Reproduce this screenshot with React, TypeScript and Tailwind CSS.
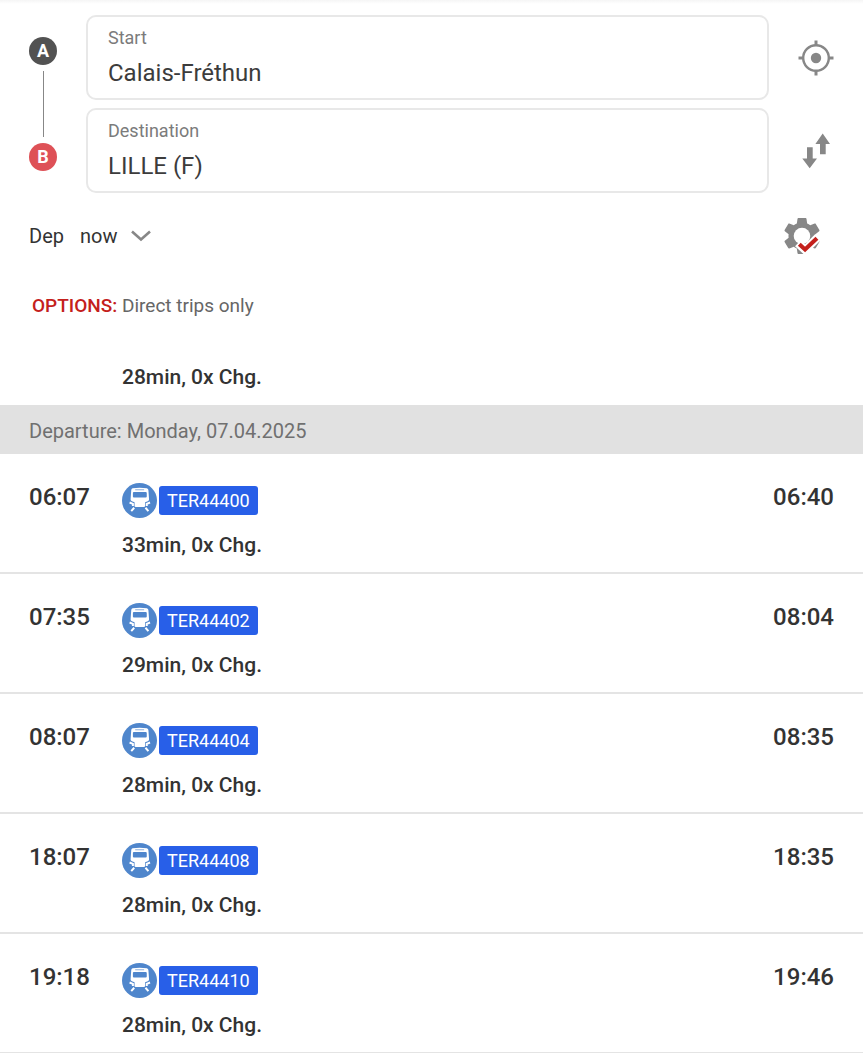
type Trip = {
  departure: string;
  arrival: string;
  line: string;
  duration: string;
};

const trips: Trip[] = [
  { departure: "06:07", arrival: "06:40", line: "TER44400", duration: "33min" },
  { departure: "07:35", arrival: "08:04", line: "TER44402", duration: "29min" },
  { departure: "08:07", arrival: "08:35", line: "TER44404", duration: "28min" },
  { departure: "18:07", arrival: "18:35", line: "TER44408", duration: "28min" },
  { departure: "19:18", arrival: "19:46", line: "TER44410", duration: "28min" },
];

function LocateIcon() {
  return (
    <svg viewBox="0 0 36 36" className="size-9" fill="none" stroke="#878787" aria-hidden="true">
      <circle cx="18" cy="18" r="12.8" strokeWidth="2.4" />
      <circle cx="18" cy="18" r="5.2" fill="#878787" stroke="none" />
      <path d="M18 .5v5M18 30.5v5M.5 18h5M30.5 18h5" strokeWidth="3" />
    </svg>
  );
}

function SwapIcon() {
  return (
    <svg viewBox="0 0 36 36" className="size-9" fill="#878787" aria-hidden="true">
      <path d="M24.700 .6 32 11h-4.300v10.200h-5.700V11h-4.600z" />
      <path d="M9 14.200h5.700v11.300H19L11.700 35.200 4.300 25.500H9z" />
    </svg>
  );
}

function SettingsIcon() {
  return (
    <svg viewBox="2 2 20 20" className="size-9" fill="none" aria-hidden="true">
      <path
        fill="#878787"
        d="M19.430 12.980c.04-.32.07-.64.07-.98s-.03-.66-.07-.98l2.110-1.650c.19-.15.24-.42.12-.64l-2-3.460c-.12-.22-.39-.3-.61-.22l-2.490 1c-.52-.4-1.080-.73-1.690-.98l-.38-2.650C14.460 2.180 14.250 2 14 2h-4c-.25 0-.46.18-.49.42l-.38 2.650c-.61.25-1.170.59-1.690.98l-2.490-1c-.23-.09-.49 0-.61.22l-2 3.460c-.13.22-.07.49.12.64l2.110 1.650c-.04.32-.07.65-.07.98s.03.66.07.98l-2.110 1.650c-.19.15-.24.42-.12.64l2 3.460c.12.22.39.3.61.22l2.490-1c.52.4 1.080.73 1.690.98l.38 2.650c.03.24.24.42.49.42h4c.25 0 .46-.18.49-.42l.38-2.650c.61-.25 1.170-.59 1.690-.98l2.490 1c.23.09.49 0 .61-.22l2-3.460c.12-.22.07-.49-.12-.64l-2.110-1.650z"
      />
      <circle cx="12" cy="12" r="4.6" fill="#fff" />
      <path d="M9.700 16 13.700 19.700 21 12.600" stroke="#fff" strokeWidth="4.600" />
      <path d="M10.500 16.600 13.700 19.500 20.300 13.300" stroke="#c4201c" strokeWidth="2.300" />
    </svg>
  );
}

function TrainIcon() {
  return (
    <svg viewBox="0 0 106 106" className="size-[35px]" aria-hidden="true">
      <circle cx="53" cy="53" r="53" fill="#4f86cc" />
      <path
        fill="#fff"
        d="M32 16q21.500-3 43 0 5 1 5 6l2 28q0 4-4 5l-8 3v12q0 3-4 3H42q-4 0-4-3V58l-8-3q-4-1-4-5l2-28q0-5 4-6z"
      />
      <path stroke="#4f86cc" strokeWidth="2" d="M40 20.500h27" />
      <rect x="33" y="27" width="42" height="17" rx="3" fill="#4f86cc" />
      <path
        stroke="#fff"
        strokeWidth="6"
        fill="none"
        d="M23 59l10 4v7M85 59l-10 4v7M37 75l-9 10M71 75l9 10"
      />
    </svg>
  );
}

function Field({ id, label, value }: { id: string; label: string; value: string }) {
  return (
    <div className="flex h-[85px] flex-col rounded-[10px] border-2 border-[#e8e8e8] px-5 pt-2">
      <label htmlFor={id} className="text-lg leading-[26px] text-[#7b7b7b]">
        {label}
      </label>
      <input
        id={id}
        type="text"
        defaultValue={value}
        className="mt-1.5 h-8 w-full bg-transparent text-2xl text-[#3c3c3c] outline-none"
      />
    </div>
  );
}

function TripRow({ trip }: { trip: Trip }) {
  return (
    <li className="flex h-[120px] items-start border-b-2 border-[#e4e4e4] px-[29px] pt-[29px]">
      <time className="w-[93px] text-2xl leading-7 font-medium">{trip.departure}</time>
      <div className="flex-1">
        <div className="flex items-center gap-0.5">
          <TrainIcon />
          <span className="rounded-[3px] bg-[#285fe8] px-2 text-lg leading-[29px] text-white">
            {trip.line}
          </span>
        </div>
        <p className="mt-[13px] text-[21px] leading-7 font-medium">{trip.duration}, 0x Chg.</p>
      </div>
      <time className="text-2xl leading-7 font-medium">{trip.arrival}</time>
    </li>
  );
}

export default function App() {
  return (
    <main className="min-h-screen bg-white font-[Roboto,sans-serif] text-[#333333]">
      <div className="h-1 bg-linear-to-b from-[#f5f5f5] to-white" />

      <form className="flex gap-[29px] px-[29px] pt-[11px]">
        <div className="flex flex-col items-center py-[22px] text-lg leading-7 font-bold text-white">
          <span className="size-7 rounded-full bg-[#525252] text-center">A</span>
          <span className="my-[6px] w-px flex-1 bg-[#878787]" />
          <span className="size-7 rounded-full bg-[#de5157] text-center">B</span>
        </div>
        <div className="flex flex-1 flex-col gap-2">
          <Field id="start" label="Start" value="Calais-Fréthun" />
          <Field id="destination" label="Destination" value="LILLE (F)" />
        </div>
        <div className="flex flex-col gap-2">
          <button type="button" aria-label="Use current location" className="flex-1">
            <LocateIcon />
          </button>
          <button type="button" aria-label="Swap start and destination" className="flex-1">
            <SwapIcon />
          </button>
        </div>
      </form>

      <div className="mt-[25px] flex items-center justify-between pr-[43px] pl-[29px]">
        <button type="button" className="flex items-center text-xl leading-7">
          <span>Dep</span>
          <span className="ml-4">now</span>
          <svg
            viewBox="0 0 20 12"
            className="ml-3.5 h-3 w-5"
            fill="none"
            stroke="#878787"
            strokeWidth="2.600"
            aria-hidden="true"
          >
            <path d="M1 1.500l9 8 9-8" />
          </svg>
        </button>
        <button type="button" aria-label="Settings">
          <SettingsIcon />
        </button>
      </div>

      <p className="mt-10 px-8 text-[19px] leading-6 text-[#666666]">
        <strong className="font-medium text-[#c4201c]">OPTIONS:</strong> Direct trips only
      </p>

      <p className="mt-[45px] pl-[122px] text-[21px] leading-7 font-medium">28min, 0x Chg.</p>

      <h2 className="mt-[14px] bg-[#e1e1e1] px-[29px] pt-3 pb-[9px] text-xl leading-7 text-[#707070]">
        Departure: Monday, 07.04.2025
      </h2>

      <ul>
        {trips.map((trip) => (
          <TripRow key={trip.line} trip={trip} />
        ))}
      </ul>
    </main>
  );
}
